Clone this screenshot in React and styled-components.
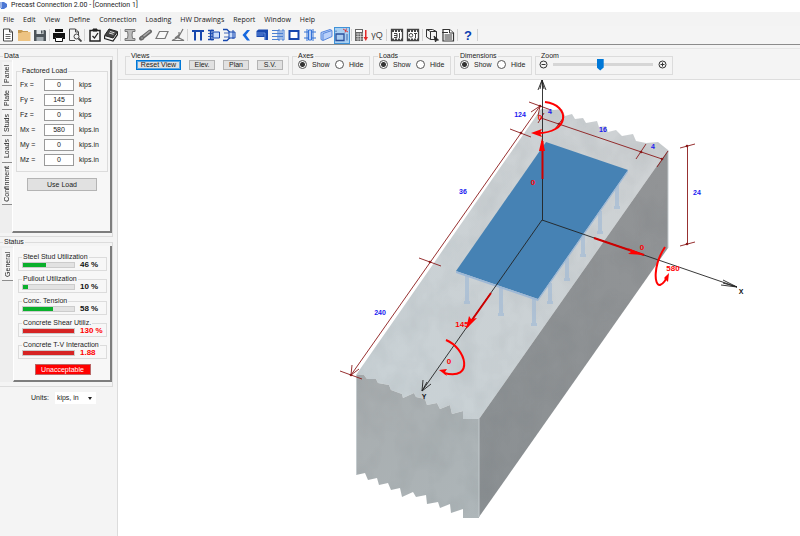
import React, { useState } from 'react';
import styled, { createGlobalStyle, css } from 'styled-components';

const GlobalStyle = createGlobalStyle`
  * {
    box-sizing: border-box;
  }
  body {
    margin: 0;
    background: #fff;
    color: #222;
    font-family: 'Liberation Sans', Arial, sans-serif;
    font-size: 7px;
    line-height: 8px;
  }
  button, input, select {
    font: inherit;
    color: inherit;
    margin: 0;
  }
`;

const Window = styled.div`
  display: flex;
  flex-direction: column;
  min-height: 100vh;
`;

const TitleBar = styled.header`
  display: flex;
  align-items: center;
  gap: 3px;
  height: 12px;
  padding-bottom: 3px;
  font-family: Roboto, 'Open Sans', sans-serif;
`;

const MenuBar = styled.nav`
  display: flex;
  align-items: center;
  gap: 9px;
  height: 14px;
  padding-left: 3px;
  background: #f3f3f3;
  font-family: 'Open Sans', 'Noto Sans', sans-serif;
`;

const MenuItem = styled.button`
  padding: 1px 0 0;
  border: 0;
  background: none;
`;

const ToolBar = styled.div`
  display: flex;
  align-items: center;
  height: 19px;
  background: #f4f4f4;
  border-bottom: 1px solid #8b8b8b;
`;

const ToolButton = styled.button`
  display: flex;
  align-items: center;
  justify-content: center;
  width: 16px;
  height: 17px;
  padding: 0;
  border: 0;
  background: none;
  ${(props) =>
    props.$active &&
    css`
      background: #a9d0f2;
      border: 1px solid #3f92d8;
    `}
`;

const Separator = styled.span`
  width: 1px;
  height: 12px;
  margin: 0 ${(props) => (props.$wide ? 2 : 1)}px 0 1px;
  background: #d2d2d2;
`;

const Main = styled.div`
  display: flex;
  flex: 1;
  padding-top: 3px;
  background: #f4f4f4;
`;

const Sidebar = styled.aside`
  width: 118px;
  flex: none;
  padding: 3px 4px 0 0;
  border-top: 1px solid #e2e2e2;
  border-right: 1px solid #dcdcdc;
`;

const Group = styled.fieldset`
  min-width: 0;
  margin: 0;
  padding: ${(props) => props.$pad || '0'};
  width: ${(props) => (props.$width ? `${props.$width}px` : 'auto')};
  border: 1px solid #dcdcdc;
  > legend {
    margin-left: 4px;
    padding: 0 1px;
  }
`;

const Panel = styled(Group)`
  border-left: 0;
  margin-bottom: 1px;
  > legend {
    margin-left: 3px;
  }
`;

const Tabbed = styled.div`
  display: flex;
`;

const Tabs = styled.div`
  display: flex;
  flex-direction: column;
  width: ${(props) => props.$width}px;
  padding: 2px 0 0 2px;
  background: #eee;
`;

const Tab = styled.button`
  display: flex;
  align-items: center;
  justify-content: center;
  height: ${(props) => props.$length}px;
  padding: 0;
  border: 0;
  border-bottom: 1px solid #8d8d8d;
  background: #f4f4f4;
  span {
    writing-mode: vertical-rl;
    transform: rotate(180deg);
  }
`;

const TabPage = styled.div`
  display: flex;
  flex-direction: column;
  flex: 1;
  min-width: 0;
  min-height: ${(props) => props.$minHeight}px;
  padding: 7px 2px 2px 3px;
  background: #f7f7f7;
  border: solid #7d7d7d;
  border-width: 0 2px 2px 0;
  border-left: 1px solid #fff;
`;

const LoadRow = styled.label`
  display: grid;
  grid-template-columns: 24px 30px 1fr;
  align-items: center;
  height: 15px;
  padding-left: 3px;
`;

const LoadInput = styled.input`
  width: 30px;
  height: 12px;
  padding: 0;
  border: 1px solid #9a9a9a;
  background: #fff;
  text-align: center;
`;

const Unit = styled.span`
  padding-left: 5px;
`;

const PushButton = styled.button`
  width: ${(props) => props.$width}px;
  height: ${(props) => props.$height || 10}px;
  padding: 0;
  border: 1px solid #b4b4b4;
  background: #e1e1e1;
  line-height: 8px;
  ${(props) =>
    props.$focused &&
    css`
      border-color: #0078d7;
      outline: 1px solid #5ba6e4;
      outline-offset: -2px;
    `}
  ${(props) =>
    props.$alert &&
    css`
      align-self: center;
      margin-top: 1px;
      border-color: #b66;
      background: #f00;
      color: #fff;
    `}
`;

const UseLoad = styled(PushButton)`
  align-self: center;
  margin-top: 6px;
`;

const CheckGroup = styled(Group)`
  height: 18px;
  margin: 0 1px 4px 1px;
  > legend {
    margin-left: 3px;
  }
`;

const CheckRow = styled.div`
  display: flex;
  align-items: center;
  gap: 5px;
  height: 8px;
  padding-left: 3px;
  font-size: 8px;
  font-weight: bold;
  color: ${(props) => (props.$bad ? '#f00' : '#111')};
`;

const Bar = styled.div`
  width: 53px;
  height: 6px;
  background: #e2e2e2;
  border: 1px solid #ccc;
`;

const Fill = styled.div`
  height: 100%;
  background: ${(props) => (props.$bad ? '#d62424' : '#0ab02c')};
`;

const UnitsRow = styled.label`
  display: flex;
  align-items: center;
  gap: 6px;
  padding: 4px 0 0 31px;
`;

const SelectBox = styled.span`
  display: flex;
  align-items: center;
  height: 12px;
  padding-right: 4px;
  background: #fff;
`;

const UnitSelect = styled.select`
  appearance: none;
  width: 33px;
  padding: 0 0 0 2px;
  border: 0;
  background: none;
`;

const Workspace = styled.main`
  display: flex;
  flex-direction: column;
  flex: 1;
  min-width: 0;
`;

const ViewBar = styled.div`
  display: flex;
  gap: 3px;
  height: 32px;
  padding: 3px 0 4px 7px;
  border-top: 1px solid #e6e6e6;
  border-bottom: 1px solid #ddd;
`;

const ViewGroup = styled(Group)`
  height: 23px;
`;

const ViewButtons = styled.div`
  display: flex;
  gap: ${(props) => props.$gap || 8}px;
  padding-left: ${(props) => props.$left || 10}px;
`;

const RadioLabel = styled.label`
  display: flex;
  align-items: center;
  gap: 5px;
  width: 32px;
`;

const Radio = styled.input`
  appearance: none;
  flex: none;
  width: 9px;
  height: 9px;
  border: 1px solid #555;
  border-radius: 50%;
  background: #fff;
  &:checked {
    background: radial-gradient(#333 0 2px, #fff 3px);
  }
`;

const ZoomRow = styled.div`
  display: flex;
  align-items: center;
  gap: 5px;
  height: 9px;
  padding: 0 5px 0 3px;
`;

const ZoomButton = styled.button`
  display: flex;
  flex: none;
  padding: 0;
  border: 0;
  background: none;
`;

const Slider = styled.input`
  appearance: none;
  flex: 1;
  min-width: 0;
  height: 12px;
  background: linear-gradient(#d6d6d6, #d6d6d6) center / 100% 3px no-repeat;
  &::-webkit-slider-thumb {
    appearance: none;
    width: 7px;
    height: 12px;
    background: #0078d7;
    clip-path: polygon(0 0, 100% 0, 100% 75%, 50% 100%, 0 75%);
  }
`;

const Canvas = styled.div`
  flex: 1;
  background: #fff;
  svg {
    display: block;
    width: 100%;
    height: auto;
  }
`;

const Scene = styled.svg`
  font-family: 'Liberation Sans', Arial, sans-serif;
  font-weight: bold;
  text-anchor: middle;
`;

const BLUE = '#1747ae';

const icons = {
  New: (
    <g fill="#fff" stroke="#444">
      <path d="M2.5 1h6l3 3v9h-9zM8.5 1v3h3" />
      <path d="M4.5 6.5h5M4.5 8.5h5M4.5 10.5h5" strokeWidth=".8" />
    </g>
  ),
  Open: (
    <g>
      <path d="M1 2h4l1 1h5v3H1z" fill="#c79a52" />
      <path d="M1 13V5h3l1-1h8.500v9z" fill="#edc382" />
    </g>
  ),
  Save: (
    <g>
      <path d="M1 2h11l1 1v10H1z" fill="#4d5459" />
      <path d="M3.500 2h7v4h-7z" fill="#dfe3e5" />
      <path d="M3.500 9h7v4h-7z" fill="#a5adb2" />
      <path d="M8 2.500h1.500v3H8z" fill="#4d5459" />
    </g>
  ),
  Print: (
    <g>
      <path d="M3 1h8v3H3zM1 5h12v6h-2V9H3v2H1z" fill="#111" />
      <path d="M3.500 9.500h7v4h-7z" fill="#fff" stroke="#111" />
    </g>
  ),
  Preview: (
    <g fill="none" stroke="#444">
      <path d="M7 12.500H1.500V1h6l3 3v3M7.500 1v3h3" />
      <circle cx="8.500" cy="8.500" r="2.500" />
      <path d="M10.500 10.500l3 3" strokeWidth="1.800" />
    </g>
  ),
  Tasks: (
    <g fill="none" stroke="#222">
      <path d="M2 2.500h10v10.500H2z" strokeWidth="1.500" />
      <path d="M5 1h4v2H5z" fill="#222" />
      <path d="M4.500 8l2 2 3.500-5" strokeWidth="1.300" />
    </g>
  ),
  Manual: (
    <g>
      <path d="M5 1l8.500 2.500L9 10 .500 7.500z" fill="#444" stroke="#222" />
      <path d="M.500 8v2.500L9 13l4.500-6.500V4" fill="none" stroke="#222" strokeWidth="1.300" />
      <path d="M6 3.500l4.500 1.300M5 5l4.500 1.300" stroke="#ddd" />
    </g>
  ),
  Section: (
    <path
      d="M2 1.500h10v2H9.500L9 7l.5 3.500H12v2H2v-2h2.500L5 7l-.5-3.500H2z"
      fill="#bbb"
      stroke="#777"
    />
  ),
  Stud: (
    <g stroke="#666">
      <path d="M2 10.500L11 3.500" strokeWidth="4" strokeLinecap="round" />
      <path d="M3 9.500L11 3" stroke="#aaa" strokeWidth="1.500" />
      <circle cx="3" cy="10" r="1.800" fill="#888" />
    </g>
  ),
  Plate: (
    <path d="M4.500 3.500h8.500L10 10.500H1z" fill="#f8f8f8" stroke="#777" strokeWidth="1.200" />
  ),
  Anchor: (
    <g fill="none" stroke="#777" strokeWidth="1.200">
      <path d="M1 12.500h12L7 9.500zM7 10l5-9M8 7L4 10M8 4v7" />
    </g>
  ),
  Tee: (
    <path d="M1 2h12v2H1zM3 4h2v8.500H3zM9 4h2v8.500H9z" fill={BLUE} />
  ),
  SideA: (
    <g fill="#c9dcfb" stroke={BLUE}>
      <path d="M1 2.500h6M1 11.500h6M3.500 2.500v9" fill="none" strokeWidth="1.300" />
      <path d="M6 4h6.500v6H6zM5 1.500v11" />
      <path d="M1 5.500h5M1 8.500h5" strokeWidth=".8" />
    </g>
  ),
  SideB: (
    <g fill="#c9dcfb" stroke={BLUE}>
      <path d="M0 1.500h4l4 4v3l-4 4H0" fill="none" strokeWidth="1.300" />
      <path d="M6 4h6v6H6zM10 2v9" />
      <path d="M1 5h5M1 9h5" strokeWidth=".8" />
    </g>
  ),
  Corbel: (
    <path d="M11 2H8L3.500 7l4.500 5.500h3L7 7z" fill="#1668df" />
  ),
  Ledge: (
    <g>
      <path d="M1.500 3l2-1.500h9.500v10.500h-3.500V9h-8z" fill={BLUE} />
      <path d="M1.500 5h8.500v7M1.500 7h7" fill="none" stroke="#7fa4ea" strokeWidth=".8" />
    </g>
  ),
  Beam: (
    <g fill="#dbe8ff" stroke="#4c80d2">
      <path d="M7 2h2v10H7zM11 2h2v10h-2z" />
      <path d="M1 2.500h7M1 5.500h11M1 8.500h11M1 11.500h7" strokeWidth="1.200" />
    </g>
  ),
  Box: (
    <rect x="2.500" y="3" width="9" height="8" fill="#fff" stroke={BLUE} strokeWidth="2" />
  ),
  Grid: (
    <g fill="none" stroke="#3674d8">
      <path d="M4 1v12M10 1v12M1 4h12M1 10h12" />
      <path d="M5.500 2v10h3V2z" fill="#b8cff7" />
    </g>
  ),
  Slab: (
    <g fill="#b9d0fa" stroke="#5787dc">
      <path d="M2 4.500l9-3 2 1v6l-9 4-2-1zM4 12V5.500l9-3" />
    </g>
  ),
  Dimension: (
    <g fill="none" stroke="#2a4f9c" strokeWidth="1.300">
      <path d="M1 6h8v6.500H1z" fill="#a9cbef" />
      <path d="M1 4V2.500M12 6v6.500" strokeWidth=".8" />
      <path d="M8 1l5 3M10 4.500l1.500-4" stroke="#d33" strokeWidth=".9" />
    </g>
  ),
  Calculate: (
    <g>
      <path d="M1 1h8v12H1z" fill="#666" />
      <path d="M2 2h6v2H2z" fill="#fff" />
      <path d="M2 6h7M2 8.500h7M2 11h7M4 5v8M6.500 5v8" stroke="#eee" strokeWidth=".6" />
      <path d="M11 2h1.500v7H14l-2.200 4L9.500 9H11z" fill="#e32b2b" />
    </g>
  ),
  Factors: (
    <text x="7" y="10" textAnchor="middle" fontSize="9" fill="#444">γQ</text>
  ),
  SheetA: (
    <g fill="#fff" stroke="#444">
      <path d="M1.500 1.500h11v11h-11z" strokeWidth="1.300" />
      <path d="M2 3h10M2 11.500h10" strokeDasharray="2 1" strokeWidth="1.800" />
      <path d="M4 5.500h3v4H4M7 7.500h-3M9.500 5v5" />
    </g>
  ),
  SheetB: (
    <g fill="#fff" stroke="#444">
      <path d="M1.500 1.500h11v11h-11z" strokeWidth="1.300" />
      <path d="M2 3h10M2 11.500h10" strokeDasharray="2 1" strokeWidth="1.800" />
      <circle cx="5" cy="7.300" r="1.800" />
      <path d="M8 5.500h3M9.500 5v5" />
    </g>
  ),
  Model: (
    <g fill="none" stroke="#333">
      <path d="M1.500 1.500h6l4 2v8h-6l-4-2.500zM1.500 1.500l4 2h6M5.500 3.500v8" />
      <path d="M9 8l4.500 4-2 .3-1 1.700z" fill="#222" />
    </g>
  ),
  Report: (
    <g fill="#fff" stroke="#333">
      <path d="M2 1.500h6.500l4 3.500v8H2z" strokeWidth="1.200" />
      <path d="M8.500 1.500v3.500h4" />
      <path d="M1 4.500h6M3.500 7h7.500M3.500 9h7.500M3.500 11h7.500" />
    </g>
  ),
  Help: (
    <text x="7" y="12" textAnchor="middle" fontSize="13" fontWeight="bold" fill="#0b3fb2">?</text>
  ),
};

const toolGroups = [
  ['New', 'Open', 'Save'],
  ['Print', 'Preview'],
  ['Tasks', 'Manual'],
  ['Section', 'Stud', 'Plate', 'Anchor'],
  ['Tee', 'SideA', 'SideB', 'Corbel', 'Ledge', 'Beam', 'Box', 'Grid', 'Slab', 'Dimension'],
  ['Calculate', 'Factors'],
  ['SheetA', 'SheetB'],
  ['Model', 'Report'],
  ['Help'],
];

const menus = ['File', 'Edit', 'View', 'Define', 'Connection', 'Loading', 'HW Drawings', 'Report', 'Window', 'Help'];

const loads = [
  ['Fx', '0', 'kips'],
  ['Fy', '145', 'kips'],
  ['Fz', '0', 'kips'],
  ['Mx', '580', 'kips.in'],
  ['My', '0', 'kips.in'],
  ['Mz', '0', 'kips.in'],
];

const dataTabs = [
  ['Panel', 24],
  ['Plate', 24],
  ['Studs', 26],
  ['Loads', 27],
  ['Confinment', 42],
];

const checks = [
  { name: 'Steel Stud Utilization', value: '46 %', fill: 46 },
  { name: 'Pullout Utilization', value: '10 %', fill: 10 },
  { name: 'Conc. Tension', value: '58 %', fill: 58 },
  { name: 'Concrete Shear Utiliz.', value: '130 %', fill: 100, bad: true },
  { name: 'Concrete T-V Interaction', value: '1.88', fill: 100, bad: true },
];

// x, top and bottom of each headed stud below the plate
const studs = [
  [467, 274, 303],
  [501, 286, 315],
  [534, 297, 325],
  [550, 282, 303],
  [567, 257, 280],
  [583, 234, 256],
  [600, 210, 233],
  [617, 184, 208],
];

const dimLabels = [
  [520, 116, '124'],
  [550, 113, '4'],
  [603, 131, '16'],
  [653, 148, '4'],
  [697, 194, '24'],
  [463, 193, '36'],
  [380, 314, '240'],
];

const loadLabels = [
  [540, 119, '0'],
  [533, 184, '0'],
  [642, 249, '0'],
  [673, 270, '580'],
  [462, 326, '145'],
  [449, 363, '0'],
];

const backEdge = 'L543 108 554 109 562 108 565 115 572 113 575 118 583 117 586 122 597 120 599 126 606 125 608 131 616 129 622 135 633 133 636 140 646 142 658 141 668 149';
const frontEdge = 'L479 418 463 418 463 410 452 413 450 404 440 408 437 402 427 404 425 398 416 396 414 392 403 397 402 393 391 389 389 384 378 382 376 378 367 378 364 374 356 374';

function ShowHide({ name }) {
  const [shown, setShown] = useState(true);
  return (
    <ViewGroup $width={78}>
      <legend>{name}</legend>
      <ViewButtons $gap={5} $left={5}>
        <RadioLabel>
          <Radio type="radio" name={name} checked={shown} onChange={() => setShown(true)} />
          Show
        </RadioLabel>
        <RadioLabel>
          <Radio type="radio" name={name} checked={!shown} onChange={() => setShown(false)} />
          Hide
        </RadioLabel>
      </ViewButtons>
    </ViewGroup>
  );
}

function ConnectionModel() {
  return (
    <Scene viewBox="118 79 682 457" role="img" aria-label="Connection model">
      <defs>
        <linearGradient id="top" x1="0" y1="1" x2="1" y2="0">
          <stop offset="0" stopColor="#c8d1d5" />
          <stop offset="1" stopColor="#cfd2d4" />
        </linearGradient>
        <linearGradient id="front" x1="0" y1="0" x2="1" y2="1">
          <stop offset="0" stopColor="#a7acae" />
          <stop offset="1" stopColor="#aeb6b9" />
        </linearGradient>
        <linearGradient id="side" x1="0" y1="1" x2="1" y2="0">
          <stop offset="0" stopColor="#8b9093" />
          <stop offset="1" stopColor="#929496" />
        </linearGradient>
        <filter id="concrete" x="0" y="0" width="1" height="1" colorInterpolationFilters="sRGB">
          <feTurbulence type="fractalNoise" baseFrequency=".04 .03" numOctaves="3" seed="4" />
          <feColorMatrix values="0 0 0 0 .3  0 0 0 0 .33  0 0 0 0 .35  .16 0 0 0 -.06" />
          <feComposite in2="SourceGraphic" operator="in" result="grain" />
          <feMerge>
            <feMergeNode in="SourceGraphic" />
            <feMergeNode in="grain" />
          </feMerge>
        </filter>
      </defs>

      <g filter="url(#concrete)">
        <path d={`M356 374 L541 108 ${backEdge} ${frontEdge}z`} fill="url(#top)" />
        <path d="M479 418L668 149V247L479 516z" fill="url(#side)" />
        <path
          d="M356 374L364 374 367 378 376 378 378 382 389 384 391 389 402 393 403 397 414 392 416 396 425 398 427 404 437 402 440 408 450 404 452 413 463 410 463 418 479 418V517H463V508L451 512 450 503 440 507 438 501 427 503 426 494 416 496 413 491 402 496 400 487 391 489 388 482 379 484 377 477 368 479 365 472 356 474z"
          fill="url(#front)"
        />
      </g>
      <path d="M356.500 374V474M479 418V516M668 149V247" stroke="#c3cacd" fill="none" />

      <g fill="#9db8d6" fillOpacity=".6">
        {studs.map(([x, top, bottom]) => (
          <path key={x} d={`M${x - 2} ${top}H${x + 2}V${bottom - 3}H${x + 3}V${bottom}H${x - 3}V${bottom - 3}H${x - 2}z`} />
        ))}
      </g>
      <path d="M546 141L628 169 538 298 456 270z" fill="#4682b4" />
      <path d="M456 270L538 298 628 169v2L538 300 456 272z" fill="#9db8d6" />

      <g stroke="#8b1a1a" strokeWidth=".9" fill="none">
        <path d="M540 105L351 374M529 101l22 8M510 128l21 8M419 257l22 8M340 370l22 8" />
        <path d="M531 111l9-6-2 10M352 364l-1 10 8-6" />
        <path d="M541 117L662 158M555 128l9-12M636 158l10-15M657 166l11-16M538 122l6-10" />
        <path d="M687.500 145v98M680 147l15-4M680 245l15-4" />
      </g>
      <g fill="#8b1a1a">
        {[[540, 105], [521, 132], [430, 261], [351, 374], [559, 123], [641, 151], [662, 158], [687, 145], [687, 243]].map(
          ([x, y]) => <circle key={`${x}-${y}`} cx={x} cy={y} r="1.300" />,
        )}
      </g>

      <g stroke="#222" strokeWidth=".9" fill="none">
        <path d="M542.500 219V79M538 89l4-10 4 10M540 88l2-9 2 9" />
        <path d="M542 219L737 286M723 279l14 7-16-2M723 282l14 4" />
        <path d="M542 219L422 390M423 379l-1 11 9-7M427 381l-5 9" />
      </g>

      <g stroke="#f00" fill="none" strokeWidth="2">
        <path d="M542.500 178V140" stroke="#c00" />
        <path d="M594 237L644 254M491 292L467 326" stroke="#c00" />
        <path d="M545 101C571 104 570 133 536 132" />
        <path d="M665 246C653 264 654 285 660 284Q665 282 667 275" />
        <path d="M446 339C466 347 475 380 444 372" />
      </g>
      <g fill="#f00">
        <path d="M542 137l3 13h-6zM645 254l-17-7 3 4-3 2zM466 328l3-13 2 3 6-1z" />
        <path d="M531 132l11-4-2 4 2 4zM669 272l-5 5 4 4zM439 369l8-1-2 3 2 4z" />
      </g>

      <g fontSize="7" fill="#1a1af0">
        {dimLabels.map(([x, y, text]) => <text key={`${x}${y}`} x={x} y={y}>{text}</text>)}
      </g>
      <g fontSize="8" fill="#f00">
        {loadLabels.map(([x, y, text]) => <text key={`${x}${y}`} x={x} y={y}>{text}</text>)}
      </g>
      <g fontSize="7" fill="#111">
        <text x="741" y="293">X</text>
        <text x="424" y="398">Y</text>
      </g>
    </Scene>
  );
}

function App() {
  const [zoom, setZoom] = useState(47);
  const [values, setValues] = useState(loads.map((load) => load[1]));
  const onLoad = (index, value) => setValues(values.map((v, i) => (i === index ? value : v)));

  return (
    <Window>
      <GlobalStyle />
      <TitleBar>
        <svg width="8" height="8" viewBox="0 0 8 8">
          <path d="M0 1h4l3 2v3L4 8H1z" fill="#4d78d4" />
          <path d="M0 1h2v6H0z" fill="#9bb3e6" />
        </svg>
        Precast Connection 2.00 - [Connection 1]
      </TitleBar>
      <MenuBar>
        {menus.map((menu) => <MenuItem key={menu}>{menu}</MenuItem>)}
      </MenuBar>
      <ToolBar>
        {toolGroups.map((group, index) => (
          <React.Fragment key={group[0]}>
            {group.map((name) => (
              <ToolButton key={name} aria-label={name} $active={name === 'Dimension'}>
                <svg width="14" height="14" viewBox="0 0 14 14">{icons[name]}</svg>
              </ToolButton>
            ))}
            <Separator $wide={index % 2 === 1} />
          </React.Fragment>
        ))}
      </ToolBar>

      <Main>
        <Sidebar>
          <Panel $pad="0 0 3px">
            <legend>Data</legend>
            <Tabbed>
              <Tabs $width={12}>
                {dataTabs.map(([name, length]) => (
                  <Tab key={name} $length={length}><span>{name}</span></Tab>
                ))}
              </Tabs>
              <TabPage $minHeight={173}>
                <Group $pad="2px 0 4px">
                  <legend>Factored Load</legend>
                  {loads.map(([name, , unit], index) => (
                    <LoadRow key={name}>
                      {name} =
                      <LoadInput value={values[index]} onChange={(e) => onLoad(index, e.target.value)} />
                      <Unit>{unit}</Unit>
                    </LoadRow>
                  ))}
                </Group>
                <UseLoad $width={70} $height={13}>Use Load</UseLoad>
              </TabPage>
            </Tabbed>
          </Panel>

          <Panel $pad="0 0 4px">
            <legend>Status</legend>
            <Tabbed>
              <Tabs $width={13}>
                <Tab $length={33}><span>General</span></Tab>
              </Tabs>
              <TabPage $minHeight={136}>
                {checks.map((check) => (
                  <CheckGroup key={check.name}>
                    <legend>{check.name}</legend>
                    <CheckRow $bad={check.bad}>
                      <Bar><Fill $bad={check.bad} style={{ width: `${check.fill}%` }} /></Bar>
                      {check.value}
                    </CheckRow>
                  </CheckGroup>
                ))}
                <PushButton $alert $width={56} $height={11}>Unacceptable</PushButton>
              </TabPage>
            </Tabbed>
          </Panel>

          <UnitsRow>
            Units:
            <SelectBox>
              <UnitSelect>
                <option>kips, in</option>
              </UnitSelect>
              <svg width="4" height="3" viewBox="0 0 4 3"><path d="M0 0h4L2 3z" fill="#222" /></svg>
            </SelectBox>
          </UnitsRow>
        </Sidebar>

        <Workspace>
          <ViewBar>
            <ViewGroup $width={164}>
              <legend>Views</legend>
              <ViewButtons>
                <PushButton $width={45} $focused>Reset View</PushButton>
                <PushButton $width={26}>Elev.</PushButton>
                <PushButton $width={26}>Plan</PushButton>
                <PushButton $width={26}>S.V.</PushButton>
              </ViewButtons>
            </ViewGroup>
            <ShowHide name="Axes" />
            <ShowHide name="Loads" />
            <ShowHide name="Dimensions" />
            <ViewGroup $width={138}>
              <legend>Zoom</legend>
              <ZoomRow>
                <ZoomButton aria-label="Zoom out" onClick={() => setZoom(Math.max(0, zoom - 5))}>
                  <svg width="9" height="9" viewBox="0 0 9 9" fill="none" stroke="#333">
                    <circle cx="4.500" cy="4.500" r="3.500" />
                    <path d="M2.500 4.500h4" />
                  </svg>
                </ZoomButton>
                <Slider
                  type="range"
                  aria-label="Zoom"
                  value={zoom}
                  onChange={(e) => setZoom(Number(e.target.value))}
                />
                <ZoomButton aria-label="Zoom in" onClick={() => setZoom(Math.min(100, zoom + 5))}>
                  <svg width="9" height="9" viewBox="0 0 9 9" fill="none" stroke="#333">
                    <circle cx="4.500" cy="4.500" r="3.500" />
                    <path d="M2.500 4.500h4M4.500 2.500v4" />
                  </svg>
                </ZoomButton>
              </ZoomRow>
            </ViewGroup>
          </ViewBar>
          <Canvas>
            <ConnectionModel />
          </Canvas>
        </Workspace>
      </Main>
    </Window>
  );
}

export default App;
